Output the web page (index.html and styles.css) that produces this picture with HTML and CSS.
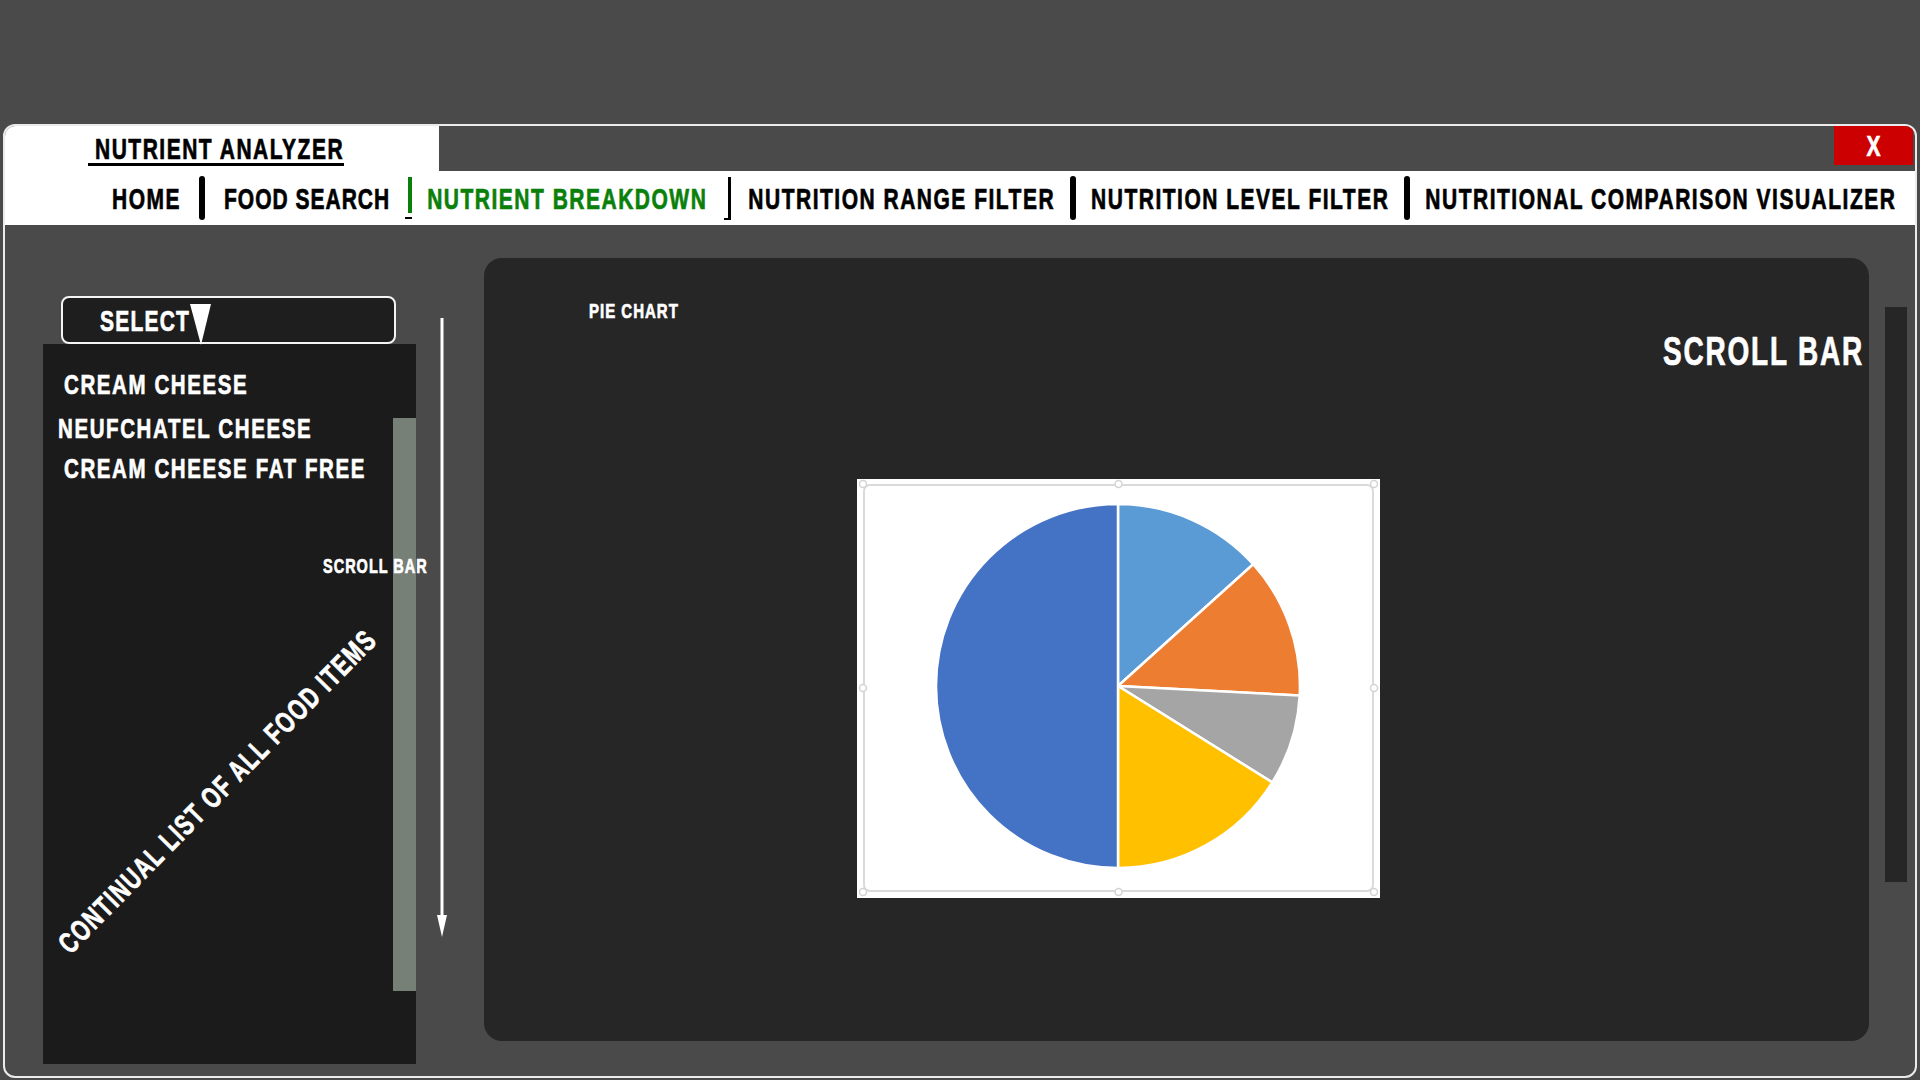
FILE: index.html
```html
<!DOCTYPE html>
<html lang="en">
<head>
<meta charset="utf-8">
<title>Nutrient Analyzer</title>
<link rel="stylesheet" href="styles.css">
</head>
<body>
<div class="window">
  <header class="titlebar">
    <div class="titlebox"><span class="title-link"><span class="t">NUTRIENT ANALYZER</span></span></div>
    <div class="close"><span class="t">X</span></div>
  </header>
  <nav class="nav">
    <a class="nav-item"><span class="t">HOME</span></a>
    <span class="sep sep-wide"></span>
    <a class="nav-item nav-tight"><span class="t">FOOD SEARCH</span></a>
    <span class="sep-green"><span class="sep-green-bar"></span><span class="sep-green-foot"></span></span>
    <a class="nav-item active"><span class="t">NUTRIENT BREAKDOWN</span></a>
    <span class="sep-thin"></span>
    <a class="nav-item"><span class="t">NUTRITION RANGE FILTER</span></a>
    <span class="sep"></span>
    <a class="nav-item"><span class="t">NUTRITION LEVEL FILTER</span></a>
    <span class="sep"></span>
    <a class="nav-item"><span class="t">NUTRITIONAL COMPARISON VISUALIZER</span></a>
  </nav>
  <main class="main">
    <section class="left">
      <div class="select">
        <span class="t">SELECT</span>
        <svg class="caret" viewBox="0 0 21 41" width="21" height="41"><polygon points="0,0 21,0 11,41" fill="#fff"/></svg>
      </div>
      <div class="list">
        <ul class="items">
          <li class="item"><span class="t">CREAM CHEESE</span></li>
          <li class="item item-shift"><span class="t">NEUFCHATEL CHEESE</span></li>
          <li class="item"><span class="t">CREAM CHEESE FAT FREE</span></li>
        </ul>
        <div class="thumb"></div>
        <span class="note-scroll"><span class="t">SCROLL BAR</span></span>
        <span class="diag">CONTINUAL LIST OF ALL FOOD ITEMS</span>
      </div>
    </section>
    <svg class="arrow" viewBox="0 0 12 620" width="12" height="620">
      <line x1="6" y1="0" x2="6" y2="600" stroke="#fff" stroke-width="3"/>
      <polygon points="1,597 11,597 6,619" fill="#fff"/>
    </svg>
    <section class="panel">
      <div class="pie-label"><span class="t">PIE CHART</span></div>
      <div class="scroll-label"><span class="t">SCROLL BAR</span></div>
      <div class="chart">
        <svg viewBox="0 0 523 419" width="523" height="419">
          <rect x="7" y="6" width="509" height="406" rx="6" fill="none" stroke="#dadada" stroke-width="2"/>
          <g stroke="#fff" stroke-width="2.5" stroke-linejoin="round">
            <path d="M261 207 L261 25 A182 182 0 0 1 396.2 85.2 Z" fill="#5b9bd5"/>
            <path d="M261 207 L396.2 85.2 A182 182 0 0 1 442.7 216.5 Z" fill="#ed7d31"/>
            <path d="M261 207 L442.7 216.5 A182 182 0 0 1 415.3 303.4 Z" fill="#a5a5a5"/>
            <path d="M261 207 L415.3 303.4 A182 182 0 0 1 261 389 Z" fill="#ffc000"/>
            <path d="M261 207 L261 389 A182 182 0 0 1 261 25 Z" fill="#4472c4"/>
          </g>
          <g fill="#fff" stroke="#d4d4d4" stroke-width="1.5">
            <circle cx="261.5" cy="5" r="3.5"/>
            <circle cx="261.5" cy="413" r="3.5"/>
            <circle cx="6" cy="209" r="3.5"/>
            <circle cx="517" cy="209" r="3.5"/>
            <circle cx="6" cy="5" r="3.5"/>
            <circle cx="517" cy="5" r="3.5"/>
            <circle cx="6" cy="413" r="3.5"/>
            <circle cx="517" cy="413" r="3.5"/>
          </g>
        </svg>
      </div>
    </section>
    <div class="track"></div>
  </main>
</div>
</body>
</html>
```

FILE: styles.css
```css
html, body {
  margin: 0;
  padding: 0;
}

body {
  background: #4a4a4a;
  font-family: "Liberation Sans", Arial, sans-serif;
  font-weight: 700;
  height: 1080px;
  overflow: hidden;
}

.t {
  display: inline-block;
  transform: scaleY(var(--sy, 1.4));
  transform-origin: 50% 50%;
  -webkit-text-stroke: 0.5px currentColor;
}

.window {
  margin: 124px 0 0 3px;
  width: 1914px;
  height: 954px;
  box-sizing: border-box;
  border: 2px solid #ebebeb;
  border-radius: 12px;
  overflow: hidden;
  display: flex;
  flex-direction: column;
  background: #4a4a4a;
}

/* Title row */
.titlebar {
  height: 45px;
  flex: none;
  display: flex;
  align-items: flex-start;
}

.titlebox {
  width: 434px;
  height: 45px;
  box-sizing: border-box;
  background: #fff;
  padding: 11px 0 0 83px;
}

.title-link {
  display: inline-block;
  font-size: 21px;
  line-height: 23px;
  letter-spacing: 1.5px;
  color: #000;
  padding: 0 0 3px 7px;
  border-bottom: 3px solid #000;
  white-space: nowrap;
}

.close {
  margin-left: auto;
  margin-right: 2px;
  width: 79px;
  height: 39px;
  background: #cc0000;
  color: #fff;
  display: flex;
  align-items: center;
  justify-content: center;
  font-size: 21px;
  line-height: 23px;
}

/* Nav */
.nav {
  height: 54px;
  flex: none;
  background: #fff;
  display: flex;
  align-items: center;
  gap: 15px;
  padding-left: 107px;
}

.nav-item {
  font-size: 21px;
  line-height: 23px;
  letter-spacing: 1.5px;
  color: #000;
  text-decoration: none;
  white-space: nowrap;
}

.nav-tight {
  letter-spacing: 1px;
}

.nav-item.active {
  color: #0a800a;
}

.sep {
  width: 6px;
  height: 44px;
  background: #000;
  border-radius: 3px;
  flex: none;
}

.sep-wide {
  margin: 0 4px 0 3px;
}

.sep-green {
  display: flex;
  flex-direction: column;
  align-items: flex-end;
  gap: 4px;
  flex: none;
}

.sep-green-bar {
  width: 4px;
  height: 36px;
  background: #0a800a;
}

.sep-green-foot {
  width: 7px;
  height: 2px;
  background: #000;
}

.sep-thin {
  width: 4px;
  height: 41px;
  margin: 0 2px 0 2px;
  border-right: 3px solid #000;
  border-bottom: 2px solid #000;
  flex: none;
}

/* Main */
.main {
  flex: 1;
  display: flex;
  align-items: flex-start;
}

.left {
  margin: 71px 0 0 38px;
  width: 373px;
  flex: none;
  display: flex;
  flex-direction: column;
}

.select {
  margin-left: 18px;
  width: 335px;
  height: 48px;
  box-sizing: border-box;
  border: 2px solid #f4f4f4;
  border-radius: 8px;
  background: #1d1e1d;
  display: flex;
  align-items: center;
  padding-left: 37px;
  color: #fff;
  font-size: 21px;
  line-height: 23px;
  letter-spacing: 1.2px;
  position: relative;
  z-index: 1;
}

.caret {
  align-self: flex-end;
  margin: 0 0 -3px 0;
  flex: none;
}

.list {
  height: 720px;
  background: #1b1b1b;
  position: relative;
}

.items {
  list-style: none;
  margin: 0;
  padding: 29px 0 0 21px;
  display: flex;
  flex-direction: column;
  gap: 20px;
  color: #fff;
  font-size: 20.5px;
  line-height: 22px;
  letter-spacing: 1.6px;
  --sy: 1.36;
}

.item {
  white-space: nowrap;
}

.item-shift {
  margin: 2px 0 -2px -6px;
}

.thumb {
  position: absolute;
  right: 0;
  top: 74px;
  width: 23px;
  height: 573px;
  background: #778077;
}

.note-scroll {
  position: absolute;
  left: 280px;
  top: 214px;
  font-size: 14.5px;
  line-height: 16px;
  letter-spacing: 1px;
  color: #fff;
  white-space: nowrap;
  z-index: 1;
}

.diag {
  position: absolute;
  left: 174px;
  top: 447px;
  font-size: 21px;
  line-height: 23px;
  letter-spacing: 1.5px;
  color: #fff;
  white-space: nowrap;
  -webkit-text-stroke: 0.5px currentColor;
  transform: translate(-50%, -50%) rotate(-45.5deg) scaleY(1.4);
}

.arrow {
  margin: 93px 0 0 20px;
  flex: none;
}

.panel {
  margin: 33px 0 0 36px;
  width: 1385px;
  height: 783px;
  flex: none;
  background: #272627;
  border-radius: 18px;
  display: flex;
  flex-direction: column;
  color: #fff;
}

.pie-label {
  margin: 45px 0 0 105px;
  font-size: 15px;
  line-height: 16px;
  letter-spacing: 1px;
  align-self: flex-start;
}

.scroll-label {
  align-self: flex-end;
  margin: 18px 5px 0 0;
  font-size: 28px;
  line-height: 29.5px;
  letter-spacing: 1.8px;
  white-space: nowrap;
  --sy: 1.45;
}

.chart {
  margin: 112px 0 0 373px;
  width: 523px;
  height: 419px;
  background: #fff;
  align-self: flex-start;
}

.chart svg {
  display: block;
}

.track {
  margin: 82px 0 0 16px;
  width: 22px;
  height: 575px;
  flex: none;
  background: #272627;
}
```
